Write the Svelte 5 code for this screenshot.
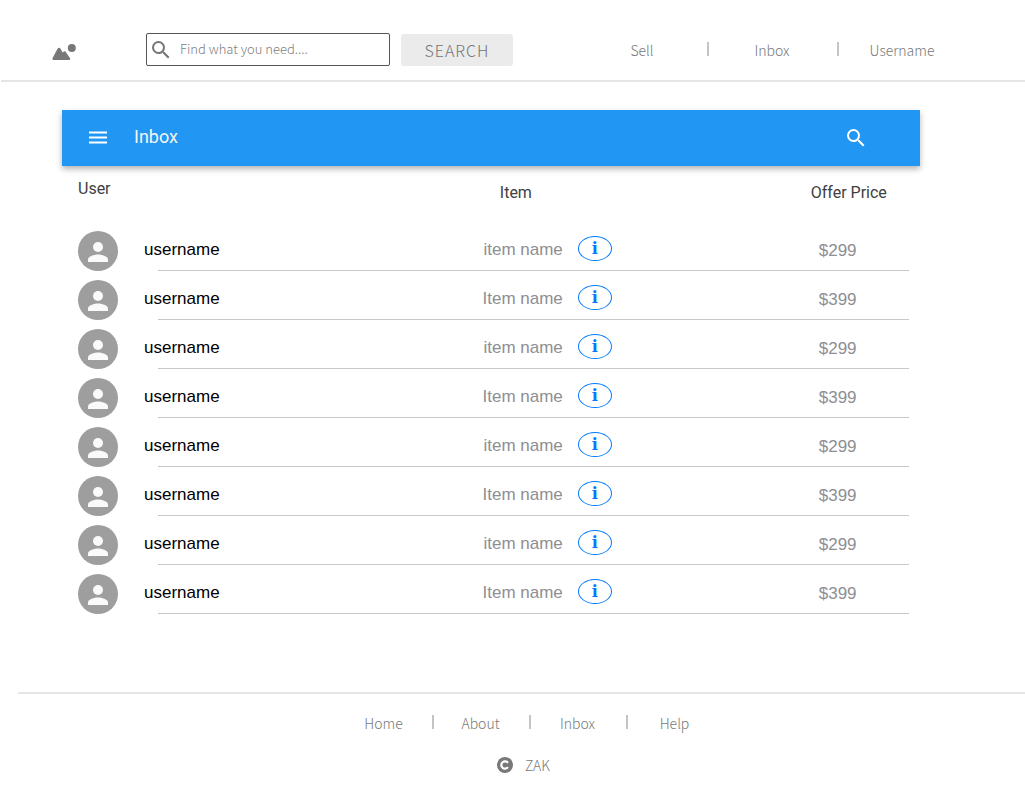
<script>
  const offers = Array.from({ length: 8 }, (_, i) => ({
    user: 'username',
    item: i % 2 ? 'Item name' : 'item name',
    price: i % 2 ? '$399' : '$299'
  }));
  const topLinks = ['Sell', 'Inbox', 'Username'];
  const footerLinks = ['Home', 'About', 'Inbox', 'Help'];
  let query = $state('');
</script>

<header class="site-header">
  <a class="logo" href="#home" aria-label="Home">
    <svg width="24" height="17" viewBox="0 0 24 17">
      <path fill="#787878" d="M.5 14.2 5.4 5Q7 2.400 8.700 5l1.900 3.500 1-.8q1.500-1 2.500.7l4 5.800q.5 1.800-1 1.800H1.400Q0 16 .5 14.200z" />
      <circle cx="19.800" cy="4" r="4" fill="#787878" />
    </svg>
  </a>
  <form class="search" onsubmit={(e) => e.preventDefault()}>
    <label class="search-box">
      <svg width="24" height="24" viewBox="0 0 24 24" aria-hidden="true">
        <path fill="#757575" d="M15.500 14h-.79l-.28-.27A6.471 6.471 0 0 0 16 9.500 6.500 6.500 0 1 0 9.500 16c1.610 0 3.090-.59 4.230-1.570l.27.28v.79l5 4.990L20.490 19l-4.990-5zm-6 0C7.010 14 5 11.990 5 9.500S7.010 5 9.500 5 14 7.010 14 9.500 11.990 14 9.500 14z" />
      </svg>
      <input type="text" bind:value={query} placeholder="Find what you need...." aria-label="Find what you need" />
    </label>
    <button class="search-button">SEARCH</button>
  </form>
  <nav class="top-nav">
    {#each topLinks as link}<a href="#{link}">{link}</a>{/each}
  </nav>
</header>

<main>
  <div class="app-bar">
    <button aria-label="Menu">
      <svg width="24" height="24" viewBox="0 0 24 24">
        <path fill="#fff" d="M3 5.500h18v2H3zM3 10.500h18v2H3zM3 15.500h18v2H3z" />
      </svg>
    </button>
    <h1>Inbox</h1>
    <button aria-label="Search inbox">
      <svg width="24" height="24" viewBox="0 0 24 24">
        <path fill="#fff" d="M15.500 14h-.79l-.28-.27A6.471 6.471 0 0 0 16 9.500 6.500 6.500 0 1 0 9.500 16c1.610 0 3.090-.59 4.230-1.570l.27.28v.79l5 4.990L20.490 19l-4.990-5zm-6 0C7.010 14 5 11.990 5 9.500S7.010 5 9.500 5 14 7.010 14 9.500 11.990 14 9.500 14z" />
      </svg>
    </button>
  </div>

  <table>
    <thead>
      <tr>
        <th class="user-col">User</th>
        <th class="item-col">Item</th>
        <th class="price-col">Offer Price</th>
      </tr>
    </thead>
    <tbody>
      {#each offers as offer}
        <tr>
          <td>
            <div class="user">
              <svg width="40" height="40" viewBox="0 0 40 40" aria-hidden="true">
                <circle cx="20" cy="20" r="20" fill="#9e9e9e" />
                <circle cx="20" cy="16" r="5" fill="#fafafa" />
                <path fill="#fafafa" d="M20 23.500c-3.340 0-10 1.680-10 5V31h20v-2.500c0-3.320-6.660-5-10-5z" />
              </svg>
              <span>{offer.user}</span>
            </div>
          </td>
          <td>
            <div class="item">
              <span>{offer.item}</span>
              <button aria-label="Item details">i</button>
            </div>
          </td>
          <td class="price">{offer.price}</td>
        </tr>
      {/each}
    </tbody>
  </table>
</main>

<footer>
  <nav class="footer-nav">
    {#each footerLinks as link}<a href="#{link}">{link}</a>{/each}
  </nav>
  <div class="copyright">
    <svg width="16" height="16" viewBox="0 0 16 16" aria-label="Copyright">
      <circle cx="8" cy="8" r="8" fill="#787878" />
      <path d="M11 5.800A3.700 3.700 0 1 0 11 10.200" fill="none" stroke="#fff" stroke-width="2.200" />
    </svg>
    <span>ZAK</span>
  </div>
</footer>

<style>
  :global(body) {
    background: #fff;
  }
  * {
    box-sizing: border-box;
  }
  button {
    padding: 0;
    border: 0;
    background: none;
    cursor: pointer;
  }
  svg {
    display: block;
    flex: none;
  }
  .site-header,
  footer {
    font-family: 'Noto Sans CJK SC', 'Open Sans', sans-serif;
    font-weight: 300;
    font-size: 14px;
    line-height: 20px;
    color: #787878;
  }
  .site-header {
    display: flex;
    align-items: center;
    margin-left: 1px;
    padding: 19px 58px 0 51px;
    height: 82px;
    border-bottom: 2px solid #e5e5e5;
  }
  .logo {
    margin-right: 70px;
    padding-top: 5px;
  }
  .search {
    display: flex;
    flex: 1;
    align-items: center;
    gap: 11px;
    margin-right: 64px;
  }
  .search-box {
    display: flex;
    flex: 1;
    align-items: center;
    gap: 7px;
    height: 33px;
    padding: 0 2px;
    border: 1px solid #555;
    border-radius: 2px;
  }
  .search-box input {
    flex: 1;
    min-width: 0;
    padding: 0 0 2px;
    border: 0;
    outline: 0;
    background: none;
    font: inherit;
    font-size: 13px;
    color: #666;
  }
  .search-box input::placeholder {
    color: #808080;
    opacity: 1;
  }
  .search-button {
    width: 112px;
    height: 32px;
    border-radius: 3px;
    background: #ebebeb;
    font: inherit;
    font-size: 16px;
    letter-spacing: 1px;
    color: #757575;
  }
  a {
    color: inherit;
    text-decoration: none;
  }
  .top-nav,
  .footer-nav {
    display: flex;
  }
  .top-nav a,
  .footer-nav a {
    display: flex;
    justify-content: center;
    background: linear-gradient(#c4c4c4, #c4c4c4) no-repeat left 2px / 2px 14px;
  }
  .top-nav a {
    width: 130px;
  }
  .top-nav a:first-child,
  .footer-nav a:first-child {
    background: none;
  }
  main {
    margin: 28px 105px 0 62px;
  }
  .app-bar {
    display: flex;
    align-items: center;
    height: 56px;
    padding: 0 52px 0 24px;
    background: #2196f3;
    box-shadow: 0 3px 6px rgba(0, 0, 0, 0.3);
  }
  h1 {
    flex: 1;
    margin: 0 24px;
    padding-bottom: 2px;
    font: 400 18px/24px Roboto, sans-serif;
    color: #f5f5f5;
  }
  table {
    width: calc(100% - 11px);
    table-layout: fixed;
    border-collapse: collapse;
    font: 17px/20px 'Liberation Sans', Arial, sans-serif;
  }
  th {
    height: 56px;
    padding: 17px 0 0 16px;
    vertical-align: top;
    text-align: left;
    font: 400 16px/20px Roboto, sans-serif;
    color: #404040;
  }
  .user-col {
    width: 49.800%;
    padding-top: 13px;
  }
  .item-col {
    width: 38.600%;
  }
  .price-col {
    padding-left: 0;
  }
  tbody tr {
    background: linear-gradient(#c8c7cc, #c8c7cc) no-repeat right bottom / calc(100% - 96px) 1px;
  }
  td {
    height: 49px;
    padding: 0;
  }
  .user {
    display: flex;
    align-items: center;
    gap: 26px;
    padding: 9px 0 0 16px;
    color: #000;
  }
  .user span {
    padding-bottom: 2px;
  }
  .item {
    display: flex;
    align-items: center;
    gap: 15px;
    padding-top: 4px;
    color: #8e8e93;
  }
  .item span {
    width: 79px;
    display: flex;
    justify-content: flex-end;
    padding-top: 2px;
    white-space: nowrap;
  }
  .item button {
    width: 34px;
    height: 25px;
    border: 1px solid #007aff;
    border-radius: 50%;
    font: 700 16px/22px 'DejaVu Serif', serif;
    color: #007aff;
  }
  .price {
    padding: 8px 0 0 8px;
    color: #8e8e93;
  }
  footer {
    margin: 78px 0 0 18px;
    padding: 19px 0;
    border-top: 2px solid #e5e5e5;
  }
  .footer-nav {
    justify-content: center;
    padding-left: 15px;
  }
  .footer-nav a {
    width: 97px;
  }
  .copyright {
    display: flex;
    align-items: center;
    justify-content: center;
    gap: 12px;
    padding: 22px 0 0 4px;
  }
</style>
